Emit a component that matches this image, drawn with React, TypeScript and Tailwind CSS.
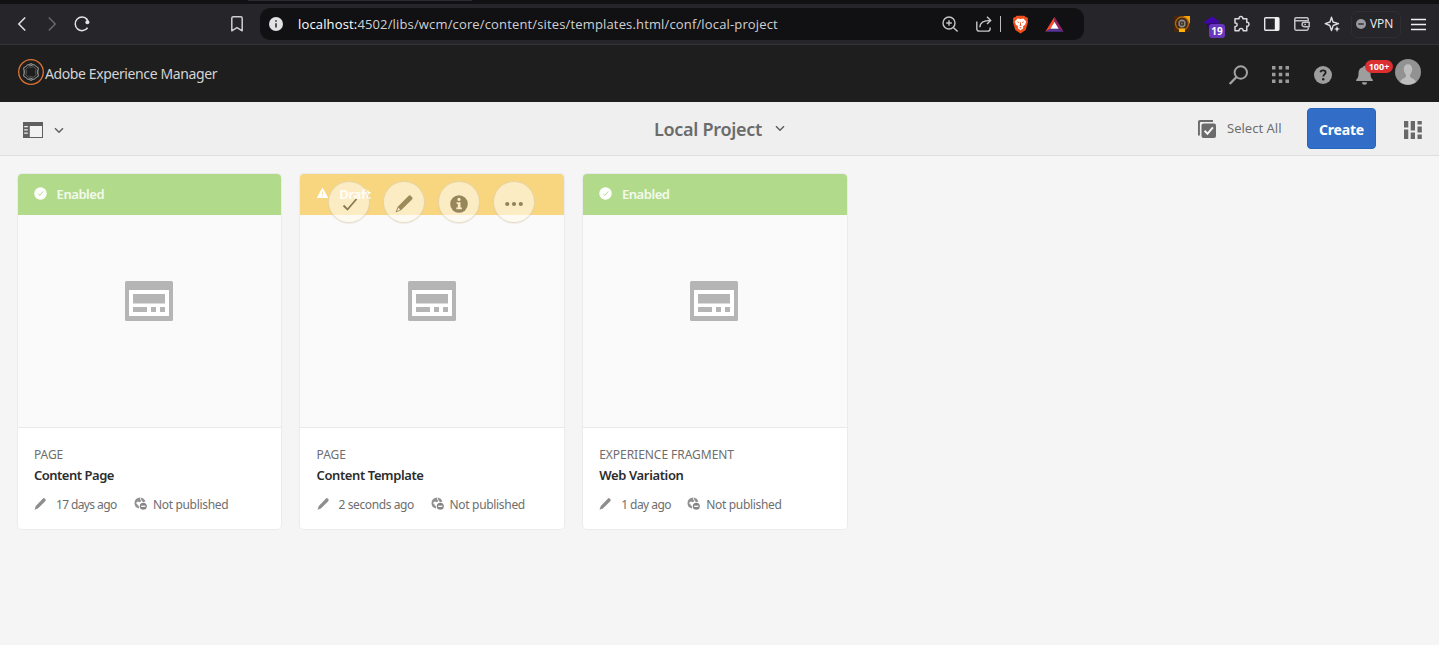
import React from 'react';

type Card = {
  status: 'Enabled' | 'Draft';
  kind: string;
  title: string;
  titleClass: string;
  age: string;
  ageClass: string;
};

const cards: Card[] = [
  { status: 'Enabled', kind: 'PAGE', title: 'Content Page', titleClass: 'tracking-[-0.48px]', age: '17 days ago', ageClass: 'w-[78px] tracking-[-0.6px]' },
  { status: 'Draft', kind: 'PAGE', title: 'Content Template', titleClass: 'tracking-[-0.4px]', age: '2 seconds ago', ageClass: 'w-[92px] tracking-[-0.4px]' },
  { status: 'Enabled', kind: 'EXPERIENCE FRAGMENT', title: 'Web Variation', titleClass: 'tracking-[-0.36px]', age: '1 day ago', ageClass: 'w-[66px] tracking-[-0.55px]' },
];

function Slot({ children }: { children: React.ReactNode }) {
  return <div className="flex w-[30px] shrink-0 items-center justify-center">{children}</div>;
}

function BrowserBar() {
  return (
    <div className="flex h-[45px] flex-col border-b border-[#343438] bg-[#25252a]">
      <div className="flex h-1 bg-[#111114]">
        <div className="ml-[248px] h-px w-[224px] bg-[#2b2b30]" />
      </div>
      <div className="flex h-10 items-center pl-[7px] text-[#e4e4e6]">
        <Slot>
          <svg width="16" height="16" viewBox="0 0 16 16" fill="none" stroke="currentColor" strokeWidth="1.5"><path d="M11.2 1.5 4.8 8l6.4 6.5" /></svg>
        </Slot>
        <Slot>
          <svg width="16" height="16" viewBox="0 0 16 16" fill="none" stroke="#6b6b70" strokeWidth="1.4"><path d="m4.8 1.5 6.4 6.5-6.4 6.5" /></svg>
        </Slot>
        <Slot>
          <svg width="16" height="16" viewBox="0 0 16 16" fill="none" stroke="currentColor" strokeWidth="1.5">
            <path d="M13.6 11.8A6.8 6.8 0 1 1 13.2 3.4" />
            <circle cx="13.4" cy="6.2" r="2" fill="currentColor" stroke="none" />
            <path d="m12.2 2.6 1.8 2.6" />
          </svg>
        </Slot>
        <svg className="ml-[131px]" width="18" height="18" viewBox="0 0 18 18" fill="none" stroke="#cfcfd2" strokeWidth="1.5" strokeLinejoin="round">
          <path d="M3.8 3.2c0-.9.6-1.5 1.5-1.5h7.4c.9 0 1.5.6 1.5 1.5v12.6L9 12.6l-5.2 3.2z" />
        </svg>
        <div className="ml-[14px] flex h-8 w-[824px] shrink-0 items-center rounded-[10px] bg-[#111113] pl-[9px]">
          <svg width="14" height="14" viewBox="0 0 14 14"><circle cx="7" cy="7" r="7" fill="#e2e2e4" /><path d="M7 6.2v4.3M7 3.2v1.6" stroke="#222" strokeWidth="1.5" /></svg>
          <div className="ml-[15px] w-[643px] whitespace-nowrap font-['Open_Sans','Noto_Sans',sans-serif] text-[13px] leading-[18px] tracking-[0.15px] text-[#d0d0d3]">
            <span className="text-white">localhost:</span>4502/libs/wcm/core/content/sites/templates.html/conf/local-project
          </div>
          <svg width="18" height="18" viewBox="0 0 18 18" fill="none" stroke="#c6c6c9" strokeWidth="1.4"><circle cx="8" cy="8" r="6" /><path d="m12.4 12.4 4.2 4.2M8 5.2v5.6M5.2 8h5.6" /></svg>
          <svg className="ml-4" width="18" height="18" viewBox="0 0 18 18" fill="none" stroke="#c6c6c9" strokeWidth="1.4">
            <path d="M1.8 6.5v7.2c0 1.4.9 2.4 2.4 2.4h8.6c1.4 0 2.3-1 2.3-2.4v-1.2" /><path d="M4.8 12.2C5 8 8 5.4 15.4 5.4M12 1.8l3.7 3.6L12 9" />
          </svg>
          <div className="ml-[7px] h-4 w-px bg-[#bcbcbf]" />
          <svg className="ml-[10.500px]" width="17" height="19" viewBox="0 0 17 19">
            <path d="M4.6.8h7.8l1.4 1.5 1.4-.1.9 2.1-.5 1 .5 1.7-2.4 8L8.5 18.5l-5.2-3.5-2.4-8 .5-1.7-.5-1 .9-2.1 1.4.1z" fill="#f0501e" />
            <path d="M5.6 3.6 8.5 4l2.9-.4 2.8 2.8-1 3-2.3 2.2.4 1.600-2.800 2-2.800-2 .4-1.600-2.300-2.200-1-3z" fill="#fff" />
            <path d="m4.600 6.600 2.500.3-.6 1.200zM12.400 6.600l-2.500.3.6 1.200zM8.200 7h.6l.2 2.800.8.5-1.300.7-1.300-.7.8-.5zM7.200 12.700l1.300-.6 1.300.6-1.300.8z" fill="#f0501e" />
          </svg>
          <svg className="ml-4" width="19" height="17" viewBox="0 0 19 17">
            <path d="M9.5.8.3 15.8l5-3 4.2-7z" fill="#ff4b2b" /><path d="m9.5.8 9.2 15-5-3-4.2-7z" fill="#9b1f63" /><path d="m.3 15.8 5-3h8.4l5 3z" fill="#563397" /><path d="m9.5 5.8 4.2 7H5.3z" fill="#fff" />
          </svg>
        </div>
        <div className="ml-[83px] flex h-10 items-center">
          <Slot>
            <svg width="16" height="16" viewBox="0 0 16 16">
              <path d="M0 0h16v16H0z" fill="#44270e" /><path d="M9 0h7v8L13 3z" fill="#f5a506" />
              <circle cx="8" cy="7.5" r="6.5" fill="none" stroke="#bb680a" strokeWidth="1.3" /><circle cx="8" cy="7.5" r="5" fill="#302a26" />
              <path d="M5 5.500 6.500 4h3L11 5.500v4L9.500 11h-3L5 9.500z" fill="#776c64" stroke="#b8aba0" strokeWidth=".8" /><path d="M6.500 6.300h3v2.600h-3z" fill="none" stroke="#352d29" />
              <path d="M5 12.400h6V16H5z" fill="#ffb20a" />
            </svg>
          </Slot>
          <Slot>
            <div className="relative h-5 w-4">
              <svg className="mt-[2px]" width="16" height="13" viewBox="0 0 16 13"><path d="M8 .3 15.800 6v1.500H.2V6z" fill="#4006a8" /><path d="M3 7.500h10V12H3z" fill="#2c0870" /></svg>
              <div className="absolute left-[5px] top-[10px] flex h-[14px] w-4 items-center justify-center rounded-[3px] bg-[#6937be] font-['Open_Sans'] text-[10px] font-bold text-white">19</div>
            </div>
          </Slot>
          <Slot>
            <svg width="18" height="18" viewBox="0 0 18 18" fill="none" stroke="#dadadd" strokeWidth="1.5" strokeLinejoin="round">
              <path d="M2 3.700h4.100c-.6-2.900 4.200-2.900 3.700 0h4v3.700c2.900-.5 2.900 4.200 0 3.700v4.600h-3.700c.4-2.900-4.400-2.900-4 0H2v-4.200c2.800.2 2.800-3.900 0-3.600z" />
            </svg>
          </Slot>
          <Slot>
            <svg width="16" height="14" viewBox="0 0 16 14"><rect x=".7" y=".7" width="14.200" height="12.600" rx="1" fill="none" stroke="#e8e8ea" strokeWidth="1.400" /><path d="M10.800.7h4.100v12.600h-4.100z" fill="#f4f4f5" /></svg>
          </Slot>
          <Slot>
            <svg width="16" height="14" viewBox="0 0 16 14" fill="none" stroke="#c3c3c6" strokeWidth="1.500" strokeLinejoin="round"><path d="M14.200 4.500V2.200c0-.8-.5-1.400-1.300-1.400H2.100C1.300.8.8 1.400.8 2.200v9.600c0 .8.5 1.400 1.300 1.400h10.800c.8 0 1.300-.6 1.300-1.400v-1.300M.8 3.700h13.400" /><path d="M15.200 5.300h-4.900a2.200 2.200 0 0 0 0 4.400h4.900zM10.300 7.500h1.700" /></svg>
          </Slot>
          <Slot>
            <svg width="17" height="17" viewBox="0 0 17 17" fill="none" stroke="#dedee1" strokeWidth="1.400" strokeLinejoin="round"><path d="M7.500 1.200 9 6l5.500 1.700L9.200 9.500l-1.700 5-1.700-5L1.200 7.700 6 6z" /><path d="m13 9.800.8 2.400 2.300.8-2.300.8-.8 2.400-.8-2.400-2.300-.8 2.300-.8z" fill="#eee" stroke="none" /></svg>
          </Slot>
          <div className="ml-1 flex h-[27px] w-[50px] items-center rounded-md border border-[#2e2e33] pl-1">
            <svg width="10" height="10" viewBox="0 0 10 10"><circle cx="5" cy="5" r="5" fill="#9a9aa2" /><path d="M2.300 5h5.400" stroke="#303035" strokeWidth="1.500" /></svg>
            <span className="ml-[4px] font-['Open_Sans','Noto_Sans',sans-serif] text-[12px] leading-4 tracking-[-0.1px] text-[#f0f0f2]">VPN</span>
          </div>
          <div className="ml-[2px]">
            <Slot><svg width="15" height="13" viewBox="0 0 15 13" stroke="#f0f0f2" strokeWidth="1.500"><path d="M0 1.500h15M0 6.500h15M0 11.500h15" /></svg></Slot>
          </div>
        </div>
      </div>
    </div>
  );
}

function Header() {
  return (
    <header className="flex h-[57px] items-start justify-between bg-[#1e1e1e] pl-[18px] pr-[18px]">
      <div className="flex items-center pt-[14px]">
        <svg width="26" height="26" viewBox="0 0 26 26" fill="none">
          <circle cx="13" cy="13" r="12.300" stroke="#dc7433" strokeWidth="1.300" />
          <g stroke="#c9c9c9">
            <path d="M9.500 6c1.300-.7 2.300.3 3.500.3s2.200-1 3.500-.3c.8.400 1 1.300 1.900 1.600 1.500.5 2.300 1.500 1.700 3-.4 1-.4 3.800 0 4.800.6 1.500-.2 2.500-1.700 3-.9.300-1.100 1.200-1.900 1.600-1.300.7-2.300-.3-3.500-.3s-2.200 1-3.500.3c-.8-.4-1-1.300-1.900-1.600-1.500-.5-2.300-1.500-1.700-3 .4-1 .4-3.800 0-4.800-.6-1.500.2-2.500 1.700-3C8.500 7.300 8.700 6.400 9.500 6z" strokeWidth=".9" />
            <path d="M10.300 7.800c1.800.5 3.600.5 5.400 0l2.500 2.500c-.7 1.800-.7 3.600 0 5.400l-2.500 2.500c-1.800-.5-3.600-.5-5.400 0l-2.500-2.500c.7-1.800.7-3.600 0-5.400z" strokeWidth=".7" strokeOpacity=".5" />
            <path d="M11.500 5.200c1-.6 2-.6 3 0M11.500 20.800c1 .6 2 .6 3 0" strokeWidth=".8" />
          </g>
        </svg>
        <span className="ml-px mt-[3px] whitespace-nowrap text-[14px] leading-5 tracking-[-0.39px] text-[#d4d4d4]">Adobe Experience Manager</span>
      </div>
      <div className="flex items-start pt-[14px]">
        <svg className="mt-[6px]" width="20" height="20" viewBox="0 0 20 20" fill="none" stroke="#a2a2a2"><circle cx="12.800" cy="7.500" r="6.200" strokeWidth="2" /><path d="m8.500 12-6.800 7" strokeWidth="2.400" /></svg>
        <svg className="ml-[24px] mt-[7px]" width="18" height="18" viewBox="0 0 18 18" fill="#9b9b9b">
          <path d="M0 0h3.500v3.500H0zM6.800 0h3.500v3.500H6.800zM13.500 0H17v3.500h-3.500zM0 6.800h3.500v3.500H0zM6.800 6.800h3.500v3.500H6.800zM13.500 6.800H17v3.500h-3.500zM0 13.500h3.500V17H0zM6.800 13.500h3.500V17H6.800zM13.500 13.500H17V17h-3.500z" />
        </svg>
        <svg className="ml-[23.500px] mt-[7px]" width="18" height="18" viewBox="0 0 18 18"><circle cx="9" cy="9" r="9" fill="#9e9e9e" /><path d="M6.300 6.200C6.700 4.800 8 4.400 9.100 4.400c1.500 0 2.500.8 2.500 2.100 0 1.900-2.300 2-2.300 4.100" fill="none" stroke="#1e1e1e" strokeWidth="1.800" /><circle cx="9.200" cy="13.200" r="1.200" fill="#1e1e1e" /></svg>
        <div className="relative ml-[24.500px] mt-[6px] h-5 w-[17px]">
          <svg width="17" height="20" viewBox="0 0 17 20" fill="#9e9e9e"><path d="M7 2.200a1.500 1.500 0 0 1 3 0c3.300.7 4.500 3 4.500 6 0 4 1 5.200 2.300 6.600v1.200H.2v-1.200c1.300-1.400 2.300-2.600 2.300-6.600 0-3 1.200-5.300 4.500-6zM6 17.300h5a2.500 2.500 0 0 1-5 0z" /></svg>
          <div className="absolute left-[9px] top-[-5px] flex h-[13px] w-[28px] items-center justify-center rounded-full bg-[#dc2f2f] text-[9px] font-bold text-white">100+</div>
        </div>
        <svg className="ml-[22px]" width="26" height="26" viewBox="0 0 26 26"><circle cx="13" cy="13" r="13" fill="#929292" /><path d="M13 5.200c-2.900 0-4.200 2.100-4.200 4.800 0 2.300 1 4.200 2.100 5.500v2c0 1.500-4.300 1.800-5.900 5.400A13 13 0 0 0 21 23c-1.600-3.700-5.900-4-5.900-5.500v-2c1.100-1.300 2.100-3.200 2.100-5.500 0-2.700-1.300-4.800-4.200-4.800z" fill="#bebebe" /></svg>
      </div>
    </header>
  );
}

function Chevron() {
  return <svg width="10" height="7" viewBox="0 0 10 7" fill="none" stroke="#606060" strokeWidth="1.500"><path d="m1 1.200 4 4 4-4" /></svg>;
}

function Toolbar() {
  return (
    <div className="grid h-[54px] grid-cols-[1fr_auto_1fr] items-center border-b border-[#dfdfdf] bg-[#efefef]">
      <div className="flex items-center pl-[23px] pt-[3px]">
        <svg width="20" height="16" viewBox="0 0 20 16"><path d="M0 0h20v16H0z" fill="#5f5f5f" /><path d="M6.800 4H19v11H6.800z" fill="#f2f2f2" /><path d="M1.200 4.600h3.600M1.200 7.900h3.600M1.200 11.200h3.600" stroke="#f2f2f2" strokeWidth="1.300" /></svg>
        <div className="ml-[11px]"><Chevron /></div>
      </div>
      <div className="flex items-center">
        <h1 className="whitespace-nowrap text-[18px] font-semibold leading-6 tracking-[-0.28px] text-[#6b6b6b]">Local Project</h1>
        <div className="ml-[13px]"><Chevron /></div>
      </div>
      <div className="flex items-center justify-end pr-[17px]">
        <svg width="18" height="18" viewBox="0 0 18 18"><path d="M0 15.500V2C0 .7.7 0 2 0h13v1.900H3.200c-.8 0-1.300.5-1.300 1.300v12.300z" fill="#6b6b6b" /><rect x="3.500" y="3.500" width="14.500" height="14.500" rx="2" fill="#6b6b6b" /><path d="m6.600 10.800 2.900 3 5.400-6.400" fill="none" stroke="#f4f4f4" strokeWidth="2" /></svg>
        <span className="-mt-[2px] ml-[11px] w-[80px] whitespace-nowrap text-[13px] leading-5 tracking-[0px] text-[#707070]">Select All</span>
        <button className="h-[41px] w-[69px] rounded-[4px] border border-[#2566bd] bg-[#326ec8] pt-[2px] text-[14px] font-bold tracking-[-0.2px] text-white">Create</button>
        <svg className="ml-[28px] mt-[3px]" width="18" height="18" viewBox="0 0 18 18" fill="#686868"><path d="M0 0h4.300v6.500H0zM0 8.500h4.300V18H0zM6.700 0H11v9.500H6.700zM6.700 11.500H11V18H6.700zM13.500 0h4.300v3.500h-4.300zM13.500 5.500h4.300v6h-4.300zM13.500 13.500h4.300V18h-4.300z" /></svg>
      </div>
    </div>
  );
}

function QuickActions() {
  const circle = 'flex h-[42px] w-[42px] items-center justify-center rounded-full border border-[#c9b27c]/40 bg-[#fffaf0]/60 pt-1 shadow-[0_1px_1px_#0000000d]';
  return (
    <div className="absolute left-[27.500px] top-[7px] flex gap-[13px]">
      <div className={circle}><svg className="ml-[2px]" width="16" height="16" viewBox="0 0 16 16" fill="none" stroke="#8c7b50" strokeWidth="1.800"><path d="m1.500 9.500 4 4L14.500 3" /></svg></div>
      <div className={circle}><svg width="18" height="18" viewBox="0 0 18 18" fill="#9c8a59"><path d="m13.200 1.200.9-.7c.4-.3.900-.3 1.300.1l1.900 1.900c.4.400.4.900.1 1.300l-.7.9L6 15.300.5 17.500l2.200-5.700zM3.400 12.800l-1.300 3.200 3.200-1.300z" fillRule="evenodd" /></svg></div>
      <div className={circle}><svg width="18" height="18" viewBox="0 0 18 18"><circle cx="9" cy="9" r="8.800" fill="#97865a" /><circle cx="9" cy="4.400" r="1.600" fill="#fbebc5" /><path d="M6.500 7.200h4v5.400h1.400v1.600H6.300v-1.600h1.500V8.800H6.500z" fill="#fbebc5" /></svg></div>
      <div className={circle}><svg width="18" height="6" viewBox="0 0 18 6" fill="#948258"><circle cx="2.200" cy="3" r="2.100" /><circle cx="9" cy="3" r="2.100" /><circle cx="15.800" cy="3" r="2.100" /></svg></div>
    </div>
  );
}

function TemplateCard({ card }: { card: Card }) {
  const enabled = card.status === 'Enabled';
  return (
    <article className="relative flex h-[355px] w-[263.66px] flex-col overflow-hidden rounded-[4px] bg-white shadow-[0_0_0_1px_#ebebeb]">
      <div className={enabled ? 'flex h-[41px] shrink-0 items-center bg-[#b1db8a] pl-4' : 'flex h-[41px] shrink-0 items-center bg-[#f8d67f] pl-4'}>
        {enabled ? (
          <svg className="-mt-[3px]" width="13" height="13" viewBox="0 0 13 13"><circle cx="6.500" cy="6.500" r="6.200" fill="#fff" /><path d="m4.200 6.800 1.700 1.600 3.200-3.900" fill="none" stroke="#b1db8a" strokeWidth="1" /></svg>
        ) : (
          <svg className="-mt-[3px]" width="13" height="12" viewBox="0 0 13 12"><path d="M6.500.5 12.300 11H.7z" fill="#fff" /><path d="M6.500 4.500v3M6.500 8.600v1" stroke="#f8dc94" strokeWidth=".8" /></svg>
        )}
        <span className={enabled ? '-mt-[2px] ml-[10px] text-[13px] font-semibold leading-5 tracking-[-0.45px] text-white/85' : '-mt-[2px] ml-[10px] text-[13px] font-bold leading-5 tracking-[-0.4px] text-white'}>{card.status}</span>
      </div>
      <div className="flex h-[213px] shrink-0 justify-center border-b border-[#e9e9e9] bg-[#fafafa] pt-[66px]">
        <svg className="-ml-px" width="48" height="40" viewBox="0 0 48 40"><rect width="48" height="40" rx="1.500" fill="#b5b5b5" /><path d="M4 9h40v26H4z" fill="#fff" /><path d="M8 13h32v9.500H8zM8 26h14v5H8zM26 26h5v5h-5zM35 26h5v5h-5z" fill="#b5b5b5" /></svg>
      </div>
      <div className="flex flex-col pl-[16.300px] pt-4 text-[12px] text-[#6e6e6e]">
        <span className="leading-[21px] tracking-[-0.04px]">{card.kind}</span>
        <span className={`text-[13px] font-semibold leading-[21px] text-[#2c2c2c] ${card.titleClass}`}>{card.title}</span>
        <div className="mt-2 flex items-center whitespace-nowrap leading-[21px]">
          <svg className="-mt-[2px]" width="12" height="12" viewBox="0 0 12 12" fill="#8e8e8e"><path d="m8.500.9.800-.6c.3-.3.700-.3 1 0l1.300 1.300c.3.300.3.700 0 1l-.6.800-7.100 7L.5 11.800l1.300-3.700z" /></svg>
          <span className={`ml-[10px] ${card.ageClass}`}>{card.age}</span>
          <svg className="-mt-[2px]" width="13" height="13" viewBox="0 0 13 13">
            <path d="M6 .5A5.500 5.500 0 0 0 .5 6 5.500 5.500 0 0 0 5 11.400V9.700L4 8.300 2 6l1.700-1.500L6 5.300 7.300 4 6.200 2.300z" fill="#919191" /><path d="M6.500.5c2.400.2 4.300 1.700 4.900 4L9 5.200 7.700 3.500z" fill="#919191" />
            <circle cx="9.300" cy="9.300" r="3.500" fill="#858585" /><path d="M7.200 9.300h4.200" stroke="#fff" strokeWidth="1.300" />
          </svg>
          <span className="ml-[6px] tracking-[-0.32px]">Not published</span>
        </div>
      </div>
      {!enabled && <QuickActions />}
    </article>
  );
}

export default function App() {
  return (
    <div className="flex h-[645px] w-[1439px] flex-col overflow-hidden bg-[#f5f5f5] font-['Noto_Sans',sans-serif]">
      <BrowserBar />
      <Header />
      <Toolbar />
      <main className="flex gap-[19px] pl-[17.600px] pt-[18px]">
        {cards.map((card) => <TemplateCard key={card.title} card={card} />)}
      </main>
    </div>
  );
}
